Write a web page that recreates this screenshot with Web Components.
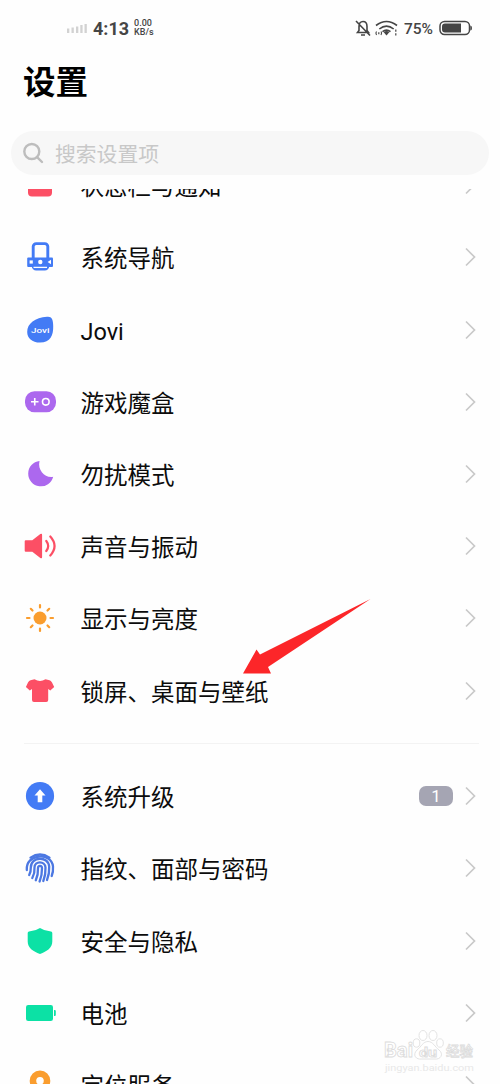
<!DOCTYPE html>
<html lang="zh-CN">
<head>
<meta charset="utf-8">
<title>设置</title>
<style>
  body {
    margin: 0;
    background: #fefefe;
    font-family: Roboto, "Noto Sans CJK SC", sans-serif;
    overflow: hidden;
  }
</style>
</head>
<body>
<settings-page>
  <status-bar slot="status"></status-bar>
  <search-field slot="search">搜索设置项</search-field>
  <settings-row icon="notice">状态栏与通知</settings-row>
  <settings-row icon="navigation">系统导航</settings-row>
  <settings-row icon="jovi">Jovi</settings-row>
  <settings-row icon="game">游戏魔盒</settings-row>
  <settings-row icon="moon">勿扰模式</settings-row>
  <settings-row icon="sound">声音与振动</settings-row>
  <settings-row icon="sun">显示与亮度</settings-row>
  <settings-row icon="shirt">锁屏、桌面与壁纸</settings-row>
  <list-divider></list-divider>
  <settings-row icon="upgrade" badge="1">系统升级</settings-row>
  <settings-row icon="fingerprint">指纹、面部与密码</settings-row>
  <settings-row icon="shield">安全与隐私</settings-row>
  <settings-row icon="battery">电池</settings-row>
  <settings-row icon="location">定位服务</settings-row>
  <pointer-arrow slot="overlay"></pointer-arrow>
  <water-mark slot="overlay"></water-mark>
</settings-page>

<script>
const colors = {
  blue: "#437bf5",
  purple: "#ac68ee",
  red: "#fc4f65",
  orange: "#fa9d2e",
  green: "#0ce1a5",
  status: "#454545",
  chevron: "#c9c9c9",
};

// Every icon is drawn on a 36x36 box, centered on 18,18
const icons = {
  notice: `<rect x="6" y="5" width="24" height="24.500" rx="4" fill="${colors.red}"/>`,
  navigation: `
    <rect x="11.200" y="4.600" width="14.600" height="25.500" rx="3" fill="none" stroke="${colors.blue}" stroke-width="2.900"/>
    <rect x="5.200" y="18.500" width="25.800" height="9.500" rx="1" fill="${colors.blue}"/>
    <circle cx="18.300" cy="23" r="2.200" fill="#fff"/>
    <rect x="7.600" y="21.400" width="3.200" height="3.200" fill="#fff"/>
    <path d="M29 20.800v4.400l-3.400-2.200z" fill="#fff"/>
    <path d="M11.500 28.400h13.500" stroke="#fff" stroke-width="1.300"/>`,
  jovi: `
    <path d="M25 4.800C29.500 4.200 31.200 7 31.200 14C31.500 23 28.500 30.600 18 30.600C10 30.600 5.200 26 5.200 20C5.200 11.500 13 5.700 25 4.800Z" fill="${colors.blue}"/>
    <text x="18.300" y="21" text-anchor="middle" textLength="18.500" lengthAdjust="spacingAndGlyphs" font-size="8" font-weight="500" fill="#fff">Jovi</text>`,
  game: `
    <rect x="3" y="7.300" width="31" height="21" rx="9.500" fill="${colors.purple}"/>
    <path d="M9 17.800h7.500M12.750 14v7.600" stroke="#fff" stroke-width="1.600"/>
    <circle cx="23.800" cy="17.800" r="3.300" fill="none" stroke="#fff" stroke-width="1.600"/>`,
  moon: `<path d="M17.500 5A12.700 12.700 0 1 0 31.200 20.800C23.500 22.500 15.200 14.500 17.500 5Z" fill="${colors.purple}"/>`,
  sound: `
    <path d="M2.700 13.300q0-1 1-1h6.600l8-6.200q1.800-1.200 1.800.8v22.200q0 2-1.800.8l-8-6.200H3.700q-1 0-1-1z" fill="${colors.red}"/>
    <path d="M24.300 13q3.800 5 0 10M28.300 8.500q8.500 9.500 0 19" fill="none" stroke="${colors.red}" stroke-width="2.200" stroke-linecap="round"/>`,
  sun: `
    <circle cx="18" cy="18" r="6.500" fill="${colors.orange}"/>
    <path d="M18 5v2.500M18 28.500v2.500M5 18h2.500M28.500 18h2.500M8.800 8.800l1.700 1.700M25.500 25.500l1.700 1.700M8.800 27.200l1.700-1.700M25.500 10.500l1.700-1.700" stroke="${colors.orange}" stroke-width="2.200" stroke-linecap="round"/>`,
  shirt: `<path d="M12.500 6.200Q18 9.800 23.500 6.200L27.500 7.300Q29 7.800 30 9.500L32.200 14L28.300 17.500L26.200 16V27Q26.200 29 24.200 29H12Q10 29 10 27V16L7.800 17.500L3.900 14L6 9.500Q7 7.800 8.500 7.300Z" fill="${colors.red}"/>`,
  upgrade: `
    <circle cx="18" cy="18" r="14.100" fill="${colors.blue}"/>
    <path d="M18 11.300L23.500 17.500H20.300V24.300H15.700V17.500H12.500Z" fill="#fff"/>`,
  fingerprint: `
    <g fill="none" stroke="#4c78e2" stroke-width="2.300" stroke-linecap="round">
      <path d="M8.500 7.600Q18 1.400 27.500 7.600"/>
      <path d="M4.800 20C3.500 3.500 29.500 1.800 31 16.500Q31.400 22 29.700 26"/>
      <path d="M7.200 25Q9 21.500 8.800 17.500C8.700 6.500 26.300 5.500 27.200 16.500Q27.500 24 25 30"/>
      <path d="M10.300 28Q13 23 12.500 17.500C12.600 10.700 23 10.700 23.500 17.500Q23.800 25 21.300 31"/>
      <path d="M13.800 30.300Q16.300 24.500 16 18.200C16 15 20 15 20 18.200Q20.100 25.500 17.600 31.500"/>
    </g>`,
  shield: `<path d="M18 5Q22.500 8.100 29 8.600Q30.300 8.700 30.300 10V18.500C30.300 25 25 28.300 18 31C11 28.300 5.700 25 5.700 18.500V10Q5.700 8.700 7 8.600Q13.500 8.100 18 5Z" fill="${colors.green}"/>`,
  battery: `
    <rect x="4" y="10" width="27" height="16" rx="2.200" fill="${colors.green}"/>
    <path d="M32 15h.7q1.100 0 1.100 1.100v3.800q0 1.100-1.100 1.100H32z" fill="${colors.green}"/>`,
  location: `<path d="M18 3.500A10.300 10.300 0 0 0 7.700 13.800C7.700 22 18 32 18 32S28.300 22 28.300 13.800A10.300 10.300 0 0 0 18 3.500ZM18 10A3.800 3.800 0 1 1 18 17.600A3.800 3.800 0 1 1 18 10Z" fill="${colors.orange}"/>`,
};

class SettingsPage extends HTMLElement {
  constructor() {
    super();
    this.attachShadow({ mode: "open" });
    this.shadowRoot.innerHTML = /*html*/ `
    <style>
      :host {
        display: flex;
        flex-direction: column;
        position: relative;
        width: 500px;
        height: 1084px;
        overflow: hidden;
      }
      h1 {
        box-sizing: border-box;
        margin: 0;
        padding: 2px 23px 0;
        height: 75px;
        line-height: 50px;
        font-size: 32.5px;
        font-weight: 700;
        color: #000;
      }
      /* Scrolled list, its first row is cut by the header */
      .list {
        flex: 1;
        min-height: 0;
        margin-top: 14px;
        overflow: hidden;
      }
      .rows {
        margin-top: -39.8px;
      }
    </style>
    <slot name="status"></slot>
    <h1>设置</h1>
    <slot name="search"></slot>
    <div class="list">
      <div class="rows"><slot></slot></div>
    </div>
    <slot name="overlay"></slot>`;
  }
}

class StatusBar extends HTMLElement {
  constructor() {
    super();
    this.attachShadow({ mode: "open" });
    this.shadowRoot.innerHTML = /*html*/ `
    <style>
      :host {
        display: flex;
        align-items: center;
        justify-content: space-between;
        box-sizing: border-box;
        height: 56px;
        padding: 0 27px 0 67px;
        color: ${colors.status};
      }
      div { display: flex; align-items: center; }
      svg { display: block; }
      .time { font-size: 18px; font-weight: 700; margin-left: 5px; padding-top: 1px; }
      .speed { font-size: 9px; line-height: 9px; font-weight: 500; margin-left: 5px; }
      .percent { font-size: 15.5px; font-weight: 500; margin: 0 6px; padding-top: 1px; }
    </style>
    <div>
      <svg width="21" height="12" viewBox="0 0 21 12" fill="#d2d2d2">
        <rect x="0" y="6.500" width="2.300" height="4.500"/>
        <rect x="4.500" y="5.500" width="2.300" height="5.500"/>
        <rect x="9" y="4.500" width="2.300" height="6.500"/>
        <rect x="13.300" y="3" width="2.300" height="8"/>
        <rect x="17.500" y="2" width="2.300" height="9"/>
      </svg>
      <span class="time">4:13</span>
      <span class="speed">0.00<br>KB/s</span>
    </div>
    <div>
      <svg width="43" height="20" viewBox="0 0 43 20" fill="none" stroke="${colors.status}" stroke-width="1.600">
        <path d="M2.500 14.500L4 12.500V8.500C4 5.300 5.600 3.500 8 3.500S12 5.300 12 8.500V12.500L13.500 14.500ZM6 17h4M1 3L15 17.500"/>
        <path d="M21 7.500Q31.500-.5 42 7.500M24.300 11Q31.500 5.200 38.700 11M27.500 13.700Q31.500 10.500 35.500 13.700"/>
        <path d="M28.500 14Q31.500 12 34.500 14L31.500 17.500Z" fill="${colors.status}" stroke="none"/>
        <path d="M21.500 13.500q-1.300 1.700 0 3.500M26 13.500q1.300 1.700 0 3.500M23.800 14.200v2M40.800 11.500v2.200M40.800 15.300v2.200" stroke-width="1.200"/>
      </svg>
      <span class="percent">75%</span>
      <svg width="34" height="16" viewBox="0 0 34 16">
        <rect x="1" y="1.500" width="29.500" height="13" rx="4.500" fill="none" stroke="${colors.status}" stroke-width="1.500"/>
        <path d="M6 3.500H22V12.500H6Q3 12.500 3 9.500V6.500Q3 3.500 6 3.500Z" fill="${colors.status}"/>
        <path d="M31.300 5.500q1.700 0 1.700 2.500t-1.700 2.500z" fill="${colors.status}"/>
      </svg>
    </div>`;
  }
}

class SearchField extends HTMLElement {
  constructor() {
    super();
    this.attachShadow({ mode: "open" });
    this.shadowRoot.innerHTML = /*html*/ `
    <style>
      :host {
        display: flex;
        align-items: center;
        gap: 11px;
        box-sizing: border-box;
        height: 44px;
        margin: 0 11px;
        padding: 0 11px;
        border-radius: 22px;
        background: #f7f7f7;
        color: #c8c8c8;
        font-size: 20.8px;
      }
    </style>
    <svg width="22" height="22" viewBox="0 0 22 22" fill="none" stroke="#bdbdbd" stroke-width="2.400" stroke-linecap="round">
      <circle cx="9.800" cy="9.500" r="7.500"/>
      <path d="M15.300 15.300L20 20"/>
    </svg>
    <span><slot></slot></span>`;
  }
}

class SettingsRow extends HTMLElement {
  constructor() {
    super();
    const badge = this.getAttribute("badge");
    this.attachShadow({ mode: "open" });
    this.shadowRoot.innerHTML = /*html*/ `
    <style>
      :host {
        display: flex;
        align-items: center;
        box-sizing: border-box;
        height: 72.2px;
        padding: 0 23px 0 22px;
        color: #0c0c0c;
      }
      svg { display: block; flex: none; }
      .label { flex: 1; margin-left: 22.500px; padding-top: 4px; font-size: 23.5px; line-height: 36px; }
      .badge {
        width: 34px;
        height: 20px;
        margin-right: 11px;
        border-radius: 7px;
        background: #a5a5b3;
        color: #fff;
        font-size: 17px;
        line-height: 21px;
        text-align: center;
      }
    </style>
    <svg width="36" height="36" viewBox="0 0 36 36">${icons[this.getAttribute("icon")]}</svg>
    <span class="label"><slot></slot></span>
    ${badge ? `<span class="badge">${badge}</span>` : ""}
    <svg width="13" height="20" viewBox="0 0 13 20" fill="none" stroke="${colors.chevron}" stroke-width="1.700">
      <path d="M2 1.500L10.500 10L2 18.500"/>
    </svg>`;
  }
}

class ListDivider extends HTMLElement {
  constructor() {
    super();
    this.attachShadow({ mode: "open" });
    this.shadowRoot.innerHTML = /*html*/ `
    <style>
      :host { display: block; padding: 16px 21px 16.5px 24px; }
      div { height: 1px; background: #f3f3f3; }
    </style>
    <div></div>`;
  }
}

// Red arrow laid over the list
class PointerArrow extends HTMLElement {
  constructor() {
    super();
    this.attachShadow({ mode: "open" });
    this.shadowRoot.innerHTML = /*html*/ `
    <style>
      :host { display: block; position: absolute; left: 240px; top: 596px; }
      svg { display: block; }
    </style>
    <svg width="134" height="80" viewBox="0 0 134 80">
      <path d="M130.500 3L20 58.500L16.500 53.500L3 77.500L31 77.500L28 71Z" fill="#fc2629"/>
    </svg>`;
  }
}

class WaterMark extends HTMLElement {
  constructor() {
    super();
    this.attachShadow({ mode: "open" });
    this.shadowRoot.innerHTML = /*html*/ `
    <style>
      :host { display: block; position: absolute; left: 380px; top: 1026px; }
      svg { display: block; }
    </style>
    <svg width="100" height="52" viewBox="0 0 100 52" fill="#fff" stroke="#dcdcdc" stroke-width=".8">
      <ellipse cx="43" cy="9.500" rx="4" ry="5"/>
      <ellipse cx="53" cy="9.500" rx="4" ry="5"/>
      <ellipse cx="36.500" cy="17" rx="3.300" ry="4.200"/>
      <ellipse cx="60" cy="17" rx="3.300" ry="4.200"/>
      <path d="M48 15.500C43 15.500 41 21 37 24C32 29 36 34 42 33H54C61 34 64 28 59 24C55 21 53 15.500 48 15.500Z"/>
      <text x="4" y="31" font-size="19.500" font-weight="700" textLength="29" lengthAdjust="spacingAndGlyphs">Bai</text>
      <text x="39" y="31" font-size="13" font-weight="700" textLength="18" lengthAdjust="spacingAndGlyphs">du</text>
      <text x="66" y="30" font-size="14" font-weight="500" textLength="27" lengthAdjust="spacingAndGlyphs">经验</text>
      <text x="5" y="45" font-size="9" textLength="89" lengthAdjust="spacingAndGlyphs" fill="#e8e8e8" stroke="none">jingyan.baidu.com</text>
    </svg>`;
  }
}

window.customElements.define("settings-page", SettingsPage);
window.customElements.define("status-bar", StatusBar);
window.customElements.define("search-field", SearchField);
window.customElements.define("settings-row", SettingsRow);
window.customElements.define("list-divider", ListDivider);
window.customElements.define("pointer-arrow", PointerArrow);
window.customElements.define("water-mark", WaterMark);
</script>
</body>
</html>
